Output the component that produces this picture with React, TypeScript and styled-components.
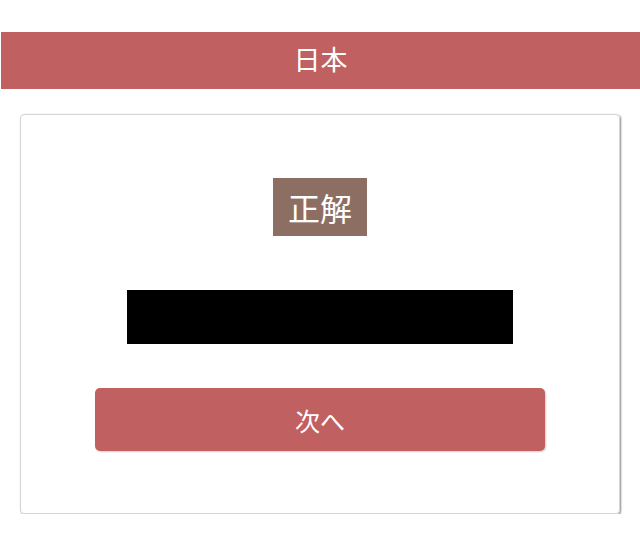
import React from 'react'
import styled, { createGlobalStyle } from 'styled-components'

const GlobalStyle = createGlobalStyle`
    html, body {
        margin: 0;
        padding: 0;
        background: #ffffff;
        font-family: "Noto Sans CJK JP", "Noto Sans", sans-serif;
    }
`

const Page = styled.div`
    width: 640px;
    padding-top: 32px;
    box-sizing: border-box;
`

const Header = styled.header`
    height: 57px;
    margin-left: 1px;
    background: #c06060;
    color: #ffffff;
    font-size: 27px;
    line-height: 1;
    display: flex;
    align-items: center;
    justify-content: center;
    padding-bottom: 4px;
    box-sizing: border-box;
`

const Card = styled.section`
    margin: 25px 20px 0;
    height: 400px;
    box-sizing: border-box;
    border: 1px solid #d4d4d4;
    border-radius: 4px;
    box-shadow: 1px 1px 2px rgba(0, 0, 0, 0.45);
    display: flex;
    flex-direction: column;
    align-items: center;
    padding-top: 63px;
`

const Badge = styled.div`
    width: 94px;
    height: 58px;
    background: #8d6e63;
    color: #ffffff;
    font-size: 32px;
    line-height: 1;
    display: flex;
    align-items: center;
    justify-content: center;
`

const Answer = styled.div`
    width: 386px;
    height: 54px;
    margin-top: 54px;
    background: #000000;
`

const NextButton = styled.button`
    width: 450px;
    height: 63px;
    margin-top: 44px;
    border: none;
    border-radius: 5px;
    background: #c06060;
    color: #ffffff;
    font-family: inherit;
    font-size: 25px;
    box-shadow: 1px 1px 2px rgba(0, 0, 0, 0.2);
    cursor: pointer;
`

export default function App() {
    return (
        <>
            <GlobalStyle />
            <Page>
                <Header>日本</Header>
                <Card>
                    <Badge>正解</Badge>
                    <Answer />
                    <NextButton>次へ</NextButton>
                </Card>
            </Page>
        </>
    )
}
